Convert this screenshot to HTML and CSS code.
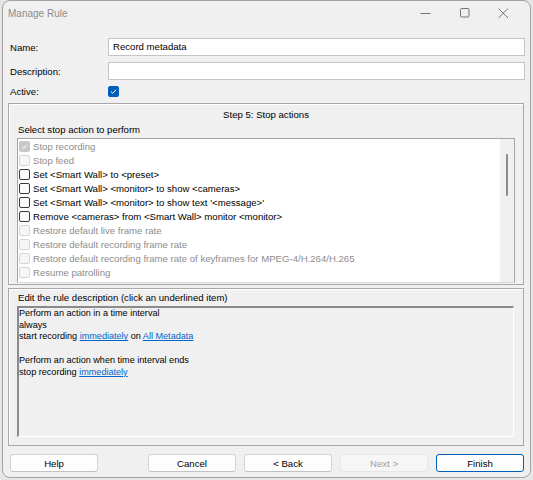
FILE: index.html
```html
<!DOCTYPE html>
<html lang="en">

<head>
    <meta charset="UTF-8">
    <meta name="viewport" content="width=device-width, initial-scale=1.0">
    <title>Manage Rule</title>
    <link rel="stylesheet" href="styles.css">
</head>

<body>
    <div class="window">
        <div class="titlebar">
            <span class="title">Manage Rule</span>
            <div class="caption-buttons">
                <span class="cap-btn">
                    <svg width="11" height="11" viewBox="0 0 11 11"><path d="M0.5 5.5 H10.5" stroke="#777" stroke-width="1" /></svg>
                </span>
                <span class="cap-btn">
                    <svg width="10" height="10" viewBox="0 0 10 10"><rect x="0.5" y="0.5" width="8.5" height="8.5" rx="1" fill="none" stroke="#777" stroke-width="1" /></svg>
                </span>
                <span class="cap-btn">
                    <svg width="11" height="11" viewBox="0 0 11 11"><path d="M0.5 0.5 L10 10 M10 0.5 L0.5 10" stroke="#777" stroke-width="1" /></svg>
                </span>
            </div>
        </div>

        <div class="content">
            <div class="form-row field-row">
                <span class="form-label">Name:</span>
                <div class="text-field">Record metadata</div>
            </div>
            <div class="form-row field-row">
                <span class="form-label">Description:</span>
                <div class="text-field"></div>
            </div>
            <div class="form-row active-row">
                <span class="form-label">Active:</span>
                <span class="check check-on">
                    <svg width="11" height="11" viewBox="0 0 11 11"><path d="M3 5.7 L4.7 7.3 L8 3.8" fill="none" stroke="#fff" stroke-width="1" /></svg>
                </span>
            </div>

            <div class="group step-group">
                <div class="group-title">Step 5: Stop actions</div>
                <div class="list-caption">Select stop action to perform</div>
                <div class="action-list">
                    <div class="list-items">
                        <div class="list-item disabled">
                            <span class="check check-grey">
                                <svg width="11" height="11" viewBox="0 0 11 11"><path d="M3 5.7 L4.7 7.3 L8 3.8" fill="none" stroke="#fff" stroke-width="1" /></svg>
                            </span>Stop recording
                        </div>
                        <div class="list-item disabled"><span class="check check-off"></span>Stop feed</div>
                        <div class="list-item"><span class="check"></span>Set &lt;Smart Wall&gt; to &lt;preset&gt;</div>
                        <div class="list-item"><span class="check"></span>Set &lt;Smart Wall&gt; &lt;monitor&gt; to show &lt;cameras&gt;</div>
                        <div class="list-item"><span class="check"></span>Set &lt;Smart Wall&gt; &lt;monitor&gt; to show text '&lt;message&gt;'</div>
                        <div class="list-item"><span class="check"></span>Remove &lt;cameras&gt; from &lt;Smart Wall&gt; monitor &lt;monitor&gt;</div>
                        <div class="list-item disabled"><span class="check check-off"></span>Restore default live frame rate</div>
                        <div class="list-item disabled"><span class="check check-off"></span>Restore default recording frame rate</div>
                        <div class="list-item disabled"><span class="check check-off"></span>Restore default recording frame rate of keyframes for MPEG-4/H.264/H.265</div>
                        <div class="list-item disabled"><span class="check check-off"></span>Resume patrolling</div>
                    </div>
                    <div class="scrollbar"><div class="thumb"></div></div>
                </div>
            </div>

            <div class="group desc-group">
                <div class="desc-caption">Edit the rule description (click an underlined item)</div>
                <div class="rule-text">
                    <div>Perform an action in a time interval</div>
                    <div>always</div>
                    <div>start recording <a href="#">immediately</a> on <a href="#">All Metadata</a></div>
                    <div>&nbsp;</div>
                    <div>Perform an action when time interval ends</div>
                    <div>stop recording <a href="#">immediately</a></div>
                </div>
            </div>

            <div class="button-row">
                <button class="btn">Help</button>
                <div class="nav-buttons">
                    <button class="btn">Cancel</button>
                    <button class="btn">&lt; Back</button>
                    <button class="btn" disabled>Next &gt;</button>
                    <button class="btn btn-default">Finish</button>
                </div>
            </div>
        </div>
    </div>
</body>

</html>
```

FILE: styles.css
```css
* {
    box-sizing: border-box;
}

body {
    margin: 0;
    background-color: #e6e6e6;
    font-family: "Liberation Sans", Arial, sans-serif;
    font-size: 9.6px;
    color: #000;
}

.window {
    margin-left: 2px;
    width: 529px;
    height: 478px;
    background-color: #f0f0f0;
    border: 1px solid #a3a3a3;
    border-radius: 8px;
    display: flex;
    flex-direction: column;
    overflow: hidden;
}

/* title bar */
.titlebar {
    height: 24px;
    display: flex;
    align-items: center;
    padding-left: 5px;
}

.title {
    font-size: 10px;
    color: #8c8c8c;
}

.caption-buttons {
    margin-left: auto;
    display: flex;
    padding-right: 7px;
}

.cap-btn {
    width: 39px;
    height: 24px;
    display: flex;
    align-items: center;
    justify-content: center;
}

/* form */
.content {
    flex: 1;
    display: flex;
    flex-direction: column;
    padding: 0 5px 0 5px;
}

.form-row {
    display: flex;
    align-items: center;
}

.form-label {
    width: 100px;
    padding-left: 2px;
}

.field-row {
    height: 18px;
}

.field-row:first-child {
    margin-top: 13px;
}

.field-row + .field-row {
    margin-top: 6px;
}

.text-field {
    flex: 1;
    height: 18px;
    background-color: #fff;
    border: 1px solid #c4c4c4;
    padding-left: 4px;
    line-height: 16px;
}

.active-row {
    margin-top: 6px;
    height: 11px;
}

.check {
    width: 11px;
    height: 11px;
    border: 1px solid #3a3a3a;
    border-radius: 2px;
    background-color: #fbfbfb;
    display: inline-flex;
    flex-shrink: 0;
}

.check svg {
    margin: -1px;
}

.check-on {
    background-color: #005fb8;
    border-color: #005fb8;
}

.check-grey {
    background-color: #c8c8c8;
    border-color: #c8c8c8;
}

.check-off {
    background-color: #f6f6f6;
    border-color: #d6d6d6;
}

/* group boxes */
.group {
    margin-right: 1px;
    border: 1px solid #a8a8a8;
    box-shadow: inset 1px 1px 0 #fff;
    padding: 0 8px;
}

.step-group {
    margin-top: 6px;
    height: 182px;
}

.group-title {
    text-align: center;
    padding-top: 5px;
    line-height: 12px;
}

.list-caption {
    margin-top: 3px;
    line-height: 12px;
    padding-left: 1px;
}

.action-list {
    margin-top: 2px;
    height: 145px;
    display: flex;
    background-color: #fff;
    border: 1px solid #a5a5a5;
    border-bottom-color: #d9d9d9;
    overflow: hidden;
}

.list-items {
    flex: 1;
    padding-left: 1px;
}

.list-item {
    height: 14px;
    display: flex;
    align-items: center;
    gap: 3px;
    white-space: nowrap;
}

.list-item.disabled {
    color: #8d8d8d;
}

.scrollbar {
    width: 14px;
    background-color: #f0f0f0;
    display: flex;
    justify-content: center;
}

.thumb {
    margin-top: 15px;
    width: 2px;
    height: 42px;
    border-radius: 1px;
    background-color: #8a8a8a;
}

.desc-group {
    margin-top: 3px;
    height: 158px;
}

.desc-caption {
    padding-top: 3px;
    line-height: 12px;
    padding-left: 1px;
}

.rule-text {
    margin-top: 2px;
    margin-right: 1px;
    height: 131px;
    border-top: 2px solid #8a8a8a;
    border-left: 2px solid #8a8a8a;
    border-right: 1px solid #fff;
    border-bottom: 1px solid #fff;
    font-size: 9.1px;
    line-height: 11.7px;
}

.rule-text a {
    color: #0066cc;
}

/* buttons */
.button-row {
    margin-top: 8px;
    display: flex;
    padding-left: 2px;
    padding-right: 1px;
}

.nav-buttons {
    margin-left: auto;
    display: flex;
    gap: 8px;
}

.btn {
    width: 88px;
    height: 18px;
    padding: 0;
    font-family: inherit;
    font-size: 9.6px;
    color: #000;
    background-color: #fdfdfd;
    border: 1px solid #d3d3d3;
    border-bottom-color: #c2c2c2;
    border-radius: 3px;
}

.btn:disabled {
    color: #9e9e9e;
    background-color: #f6f6f6;
    border-color: #e6e6e6;
}

.btn-default {
    border: 1px solid #005fb8;
}
```
